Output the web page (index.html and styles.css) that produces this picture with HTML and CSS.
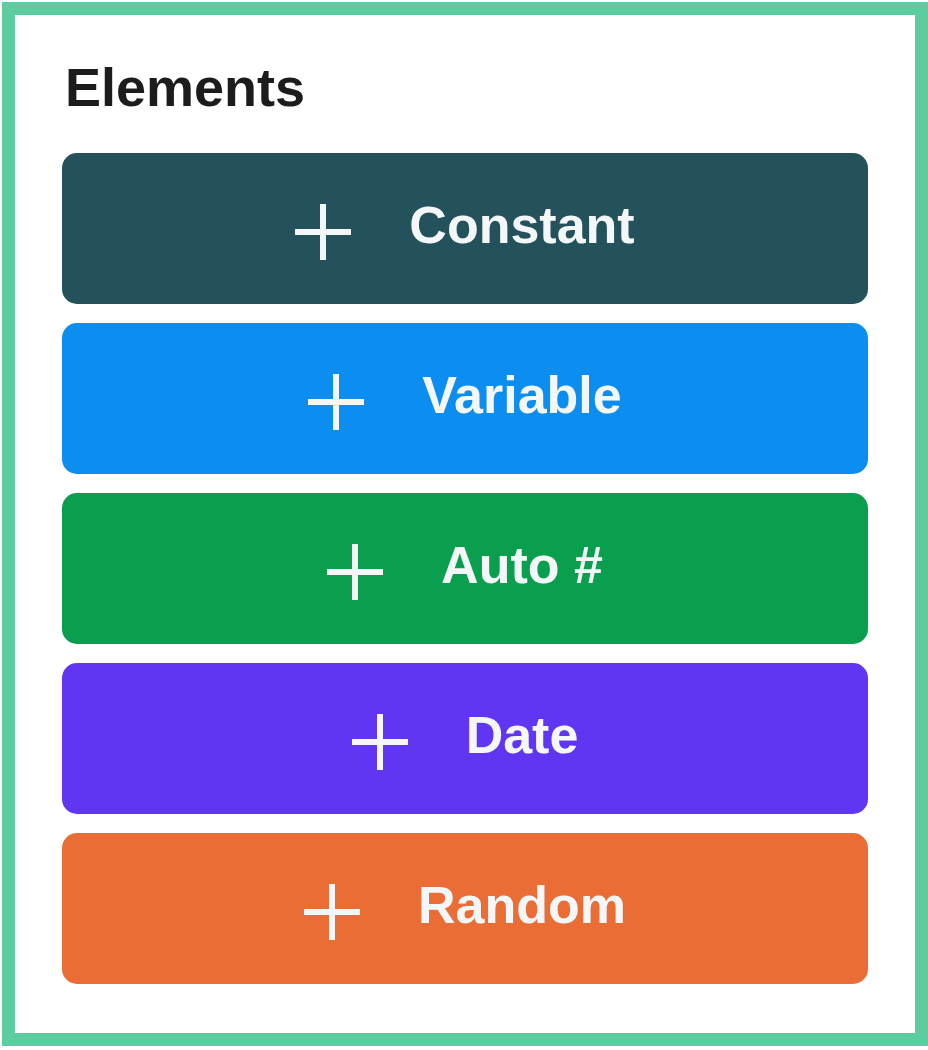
FILE: index.html
```html
<!DOCTYPE html>
<html lang="en">
<head>
<meta charset="utf-8">
<title>Elements</title>
<link rel="stylesheet" href="styles.css">
</head>
<body>
<div class="panel">
  <h2 class="title">Elements</h2>
  <div class="list">
    <button class="btn btn-constant"><svg class="plus" viewBox="0 0 56 56"><path d="M28 0V56M0 28H56"/></svg><span class="label">Constant</span></button>
    <button class="btn btn-variable"><svg class="plus" viewBox="0 0 56 56"><path d="M28 0V56M0 28H56"/></svg><span class="label">Variable</span></button>
    <button class="btn btn-auto"><svg class="plus" viewBox="0 0 56 56"><path d="M28 0V56M0 28H56"/></svg><span class="label">Auto #</span></button>
    <button class="btn btn-date"><svg class="plus" viewBox="0 0 56 56"><path d="M28 0V56M0 28H56"/></svg><span class="label">Date</span></button>
    <button class="btn btn-random"><svg class="plus" viewBox="0 0 56 56"><path d="M28 0V56M0 28H56"/></svg><span class="label">Random</span></button>
  </div>
</div>
</body>
</html>
```
FILE: styles.css
```css
html, body {
  margin: 0;
  padding: 0;
  background: #ffffff;
}
body {
  font-family: "Liberation Sans", Arial, sans-serif;
}
.panel {
  margin: 2px 0 0 2px;
  border: 13px solid #5ecca1;
  padding: 41px 47px 49px 47px;
  background: #ffffff;
}
.title {
  margin: 0 0 35px 3px;
  font-size: 54px;
  line-height: 62px;
  font-weight: 700;
  color: #1c1c1c;
}
.list {
  display: flex;
  flex-direction: column;
  gap: 19px;
}
.btn {
  display: flex;
  align-items: center;
  justify-content: center;
  gap: 58px;
  height: 151px;
  border: none;
  border-radius: 15px;
  padding: 0;
  margin: 0;
  font-family: "Liberation Sans", Arial, sans-serif;
  color: #f4f7f7;
  cursor: pointer;
}
.plus {
  width: 56px;
  height: 56px;
  margin-top: 6px;
  flex: none;
}
.plus path {
  stroke: #f4f7f7;
  stroke-width: 6;
  fill: none;
}
.label {
  font-size: 52px;
  line-height: 52px;
  font-weight: 700;
  margin-bottom: 8px;
}
.btn-constant { background: #24525c; }
.btn-variable { background: #0b8ef0; }
.btn-auto { background: #0a9e4f; }
.btn-date { background: #6036f3; }
.btn-random { background: #ea6d36; }
```
